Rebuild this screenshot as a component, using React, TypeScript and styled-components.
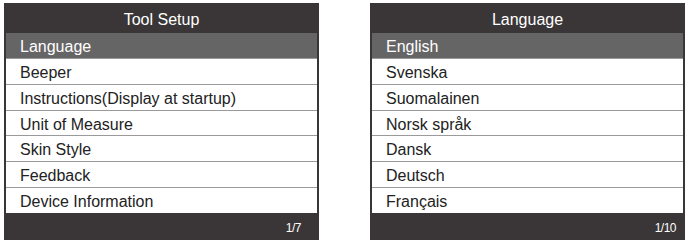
import styled, { createGlobalStyle } from 'styled-components';

const GlobalStyle = createGlobalStyle`
    body {
        margin: 0;
        background: #ffffff;
        font-family: "Liberation Sans", Arial, sans-serif;
    }
`;

const Page = styled.div`
    display: flex;
    gap: 51px;
    padding: 3px 0 0 4px;
`;

const Screen = styled.div`
    width: 315px;
    height: 237px;
    background-color: #3a3637;
    display: flex;
    flex-direction: column;
`;

const Header = styled.div`
    height: 30px;
    box-sizing: border-box;
    padding-top: 3px;
    display: flex;
    align-items: center;
    justify-content: center;
    color: #ffffff;
    font-size: 16px;
`;

const List = styled.ul`
    list-style-type: none;
    margin: 0 2px;
    padding: 0;
    height: 180px;
    display: flex;
    flex-direction: column;
    background-color: #ffffff;
`;

const Item = styled.li<{ $active?: boolean }>`
    flex: 1;
    display: flex;
    align-items: center;
    padding: 3px 0 0 14px;
    font-size: 16px;
    color: ${props => (props.$active ? '#ffffff' : '#222222')};
    background-color: ${props => (props.$active ? '#666566' : '#ffffff')};
    border-bottom: 1px solid #9a9a9a;

    &:last-child {
        border-bottom: none;
    }
`;

const Footer = styled.div<{ $pad: number }>`
    flex: 1;
    display: flex;
    align-items: center;
    justify-content: flex-end;
    padding: 2px ${props => props.$pad}px 0 0;
    color: #ffffff;
    font-size: 12px;
    letter-spacing: -0.5px;
`;

type MenuProps = {
    title: string;
    items: string[];
    page: string;
    pad: number;
};

const Menu = ({ title, items, page, pad }: MenuProps) => (
    <Screen>
        <Header>{title}</Header>
        <List>
            {items.map((item, i) => (
                <Item key={item} $active={i === 0}>{item}</Item>
            ))}
        </List>
        <Footer $pad={pad}>{page}</Footer>
    </Screen>
);

const setupItems = [
    'Language',
    'Beeper',
    'Instructions(Display at startup)',
    'Unit of Measure',
    'Skin Style',
    'Feedback',
    'Device Information',
];

const languages = [
    'English',
    'Svenska',
    'Suomalainen',
    'Norsk språk',
    'Dansk',
    'Deutsch',
    'Français',
];

const App = () => {
    return (
        <>
            <GlobalStyle />
            <Page>
                <Menu title="Tool Setup" items={setupItems} page="1/7" pad={18} />
                <Menu title="Language" items={languages} page="1/10" pad={9} />
            </Page>
        </>
    );
};

export default App;
